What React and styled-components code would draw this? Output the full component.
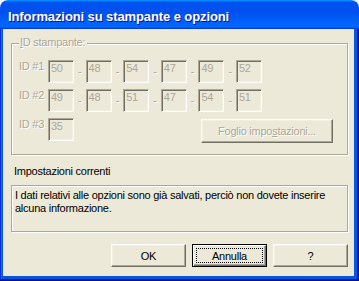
import styled, { createGlobalStyle } from 'styled-components'

const GlobalStyle = createGlobalStyle`
  html, body {
    margin: 0;
    padding: 0;
    background: #ffffff;
  }
`

const Window = styled.div`
  width: 359px;
  height: 281px;
  display: flex;
  flex-direction: column;
  border-radius: 8px 8px 0 0;
  overflow: hidden;
  font-family: 'Liberation Sans', Arial, sans-serif;
  font-size: 11px;
  letter-spacing: -0.25px;
`

const TitleBar = styled.div`
  height: 29px;
  flex: none;
  display: flex;
  align-items: center;
  padding: 3px 0 0 8px;
  box-sizing: border-box;
  background: linear-gradient(180deg, #0997ff, #0053ee 8%, #0050ee 40%, #0066ff 88%, #0066ff 93%, #005bff 95%, #003dd7 96%, #003dd7);
`

const TitleText = styled.span`
  font-family: 'Liberation Sans', Arial, sans-serif;
  font-weight: 700;
  font-size: 13px;
  line-height: 15px;
  letter-spacing: -0.1px;
  color: #ffffff;
  text-shadow: 1px 1px 0 #0f1089;
`

/* blue frame round the dialog body */
const Frame = styled.div`
  flex: 1;
  display: flex;
  padding: 0 5px 5px 3px;
  background: #0855dd;
  box-shadow:
    inset -1px -1px #00138c,
    inset 1px 0 #0831d9,
    inset -2px -2px #001ea0,
    inset 2px 0 #166aee;
`

const Body = styled.div`
  flex: 1;
  display: flex;
  flex-direction: column;
  padding: 14px 6px 0 8px;
  background: #ece9d8;
`

const GroupBox = styled.div`
  position: relative;
  box-sizing: border-box;
  height: 112px;
  display: flex;
  flex-direction: column;
  gap: 6px;
  padding: 16px 0 0 7px;
  border: 1px solid #aca899;
  box-shadow: inset 1px 1px 0 #fff, 1px 1px 0 #fff;
`

const GroupLabel = styled.span`
  position: absolute;
  top: -8px;
  left: 7px;
  padding: 0 2px 0 1px;
  line-height: 13px;
  background: #ece9d8;
  color: #aca899;
  text-shadow: 1px 1px 0 #fff;
`

const Row = styled.div`
  display: flex;
  align-items: flex-start;
  height: 23px;
`

const RowLabel = styled.span`
  width: 29px;
  flex: none;
  line-height: 13px;
  color: #aca899;
  text-shadow: 1px 1px 0 #fff;
  white-space: nowrap;
`

const Edit = styled.div`
  box-sizing: border-box;
  width: 26px;
  height: 23px;
  flex: none;
  padding: 1px 2px;
  line-height: 13px;
  color: #aca899;
  background: #ece9d8;
  border: 1px solid;
  border-color: #aca899 #fff #fff #aca899;
  box-shadow: inset 1px 1px #716f64, inset -1px -1px #f1efe2;
`

const Dash = styled.span`
  width: 11.6px;
  flex: none;
  align-self: center;
  text-align: center;
  line-height: 13px;
  color: #aca899;
  text-shadow: 1px 1px 0 #fff;
`

const Button = styled.button`
  position: relative;
  box-sizing: border-box;
  width: ${p => p.$width || 75}px;
  height: ${p => p.$height || 23}px;
  flex: none;
  padding: 0;
  margin: 0;
  background: #ece9d8;
  font-family: 'Liberation Sans', Arial, sans-serif;
  font-size: 11px;
  letter-spacing: -0.25px;
  color: ${p => (p.disabled ? '#aca899' : '#000')};
  text-shadow: ${p => (p.disabled ? '1px 1px 0 #fff' : 'none')};
  border: 1px solid;
  border-color: #fff #716f64 #716f64 #fff;
  box-shadow: inset -1px -1px #aca899, inset 1px 1px #f1efe2;

  &.default {
    border-color: #000;
    box-shadow: inset 1px 1px #fff, inset -1px -1px #716f64, inset -2px -2px #aca899;
  }

  &.default::after {
    content: '';
    position: absolute;
    inset: 3px;
    border: 1px dotted #000;
  }
`

const SheetButton = styled(Button)`
  margin: 1px 14px 0 auto;
`

const SectionLabel = styled.div`
  margin-top: 10px;
  line-height: 13px;
  padding-left: 3px;
  color: #000;
`

const InfoBox = styled.div`
  box-sizing: border-box;
  height: 47px;
  margin-top: 7px;
  padding: 3px 3px;
  line-height: 13px;
  color: #000;
  border: 1px solid #aca899;
  box-shadow: inset 1px 1px 0 #fff, 1px 1px 0 #fff;
`

const ButtonRow = styled.div`
  display: flex;
  justify-content: flex-end;
  gap: 6px;
  margin-top: 12px;
`

const ids = [
  ['50', '48', '54', '47', '49', '52'],
  ['49', '48', '51', '47', '54', '51'],
]

function IdRow({ n, values }) {
  return (
    <Row>
      <RowLabel>ID #{n}</RowLabel>
      {values.map((v, i) => (
        <span key={i} style={{ display: 'contents' }}>
          {i > 0 && <Dash>-</Dash>}
          <Edit>{v}</Edit>
        </span>
      ))}
    </Row>
  )
}

export default function App() {
  return (
    <>
      <GlobalStyle />
      <Window>
        <TitleBar>
          <TitleText>Informazioni su stampante e opzioni</TitleText>
        </TitleBar>
        <Frame>
          <Body>
            <GroupBox>
              <GroupLabel><u>I</u>D stampante:</GroupLabel>
              <IdRow n={1} values={ids[0]} />
              <IdRow n={2} values={ids[1]} />
              <Row>
                <RowLabel>ID #3</RowLabel>
                <Edit>35</Edit>
                <SheetButton disabled $width={132} $height={24}>
                  Foglio impo<u>s</u>tazioni...
                </SheetButton>
              </Row>
            </GroupBox>
            <SectionLabel>Impostazioni correnti</SectionLabel>
            <InfoBox>
              I dati relativi alle opzioni sono già salvati, perciò non dovete inserire alcuna informazione.
            </InfoBox>
            <ButtonRow>
              <Button>OK</Button>
              <Button className="default">Annulla</Button>
              <Button>?</Button>
            </ButtonRow>
          </Body>
        </Frame>
      </Window>
    </>
  )
}
